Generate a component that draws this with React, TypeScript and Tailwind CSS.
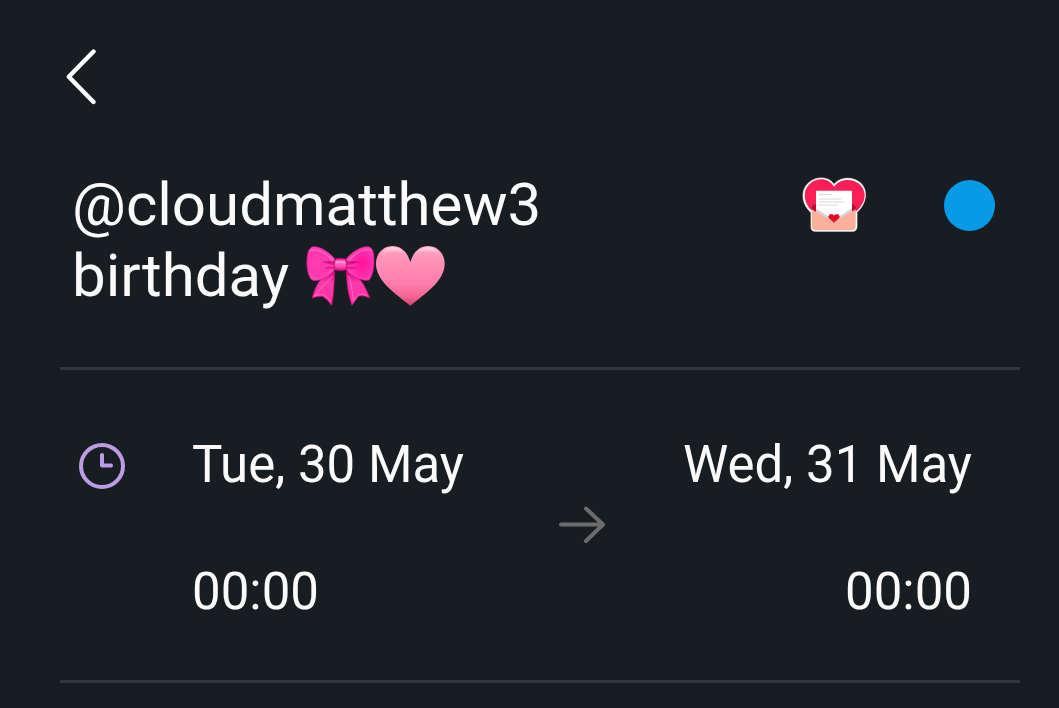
interface DateTimeProps {
  date: string;
  time: string;
  label: string;
  align: "left" | "right";
}

function BackIcon() {
  return (
    <svg width="32" height="58" viewBox="0 0 32 58" fill="none" aria-hidden="true">
      <path
        d="M29.5 3.5 4.8 28.8 29.5 54"
        stroke="#fff"
        strokeWidth="4.4"
        strokeLinecap="round"
        strokeLinejoin="round"
      />
    </svg>
  );
}

function BowIcon() {
  return (
    <svg
      className="inline-block h-[62px] w-[70px] align-[-11px]"
      viewBox="48 31 210 186"
      role="img"
      aria-label="ribbon"
    >
      <defs>
        <radialGradient id="bowLeft" cx="0.4" cy="0.48" r="0.62">
          <stop offset="0" stopColor="#ff3fae" />
          <stop offset="0.6" stopColor="#fd36ad" />
          <stop offset="0.85" stopColor="#ff4db9" />
          <stop offset="1" stopColor="#f0149a" />
        </radialGradient>
        <radialGradient id="bowRight" cx="0.6" cy="0.5" r="0.62">
          <stop offset="0" stopColor="#ff0f98" />
          <stop offset="0.6" stopColor="#fb2fab" />
          <stop offset="0.85" stopColor="#ff45b7" />
          <stop offset="1" stopColor="#ec1098" />
        </radialGradient>
        <linearGradient id="bowTail" x1="0" y1="0" x2="0" y2="1">
          <stop offset="0" stopColor="#c9006f" />
          <stop offset="0.35" stopColor="#fb3bab" />
          <stop offset="1" stopColor="#ff2ba3" />
        </linearGradient>
        <linearGradient id="bowKnot" x1="0" y1="0" x2="0" y2="1">
          <stop offset="0" stopColor="#f0108f" />
          <stop offset="0.3" stopColor="#ff7ccb" />
          <stop offset="0.65" stopColor="#ff4fb4" />
          <stop offset="1" stopColor="#e00a80" />
        </linearGradient>
      </defs>
      <path
        d="M98 128C84 142 73 165 67 190Q83 184 98 185Q112 194 125 212C131 182 132 148 134 112L124 107Z"
        fill="url(#bowTail)"
        stroke="#e5098a"
        strokeWidth="2"
      />
      <path
        d="M204 128C218 142 230 165 239 190Q222 181 206 184Q197 195 186 212C175 182 170 148 169 112L178 107Z"
        fill="url(#bowTail)"
        stroke="#e5098a"
        strokeWidth="2"
      />
      <path d="M127 124C108 145 93 160 73 184Q88 178 99 180Q112 185 122 202" fill="none" stroke="#ff75c7" strokeWidth="2.5" />
      <path d="M176 124C183 145 187 162 190 201Q198 184 207 179Q220 176 232 184" fill="none" stroke="#ff75c7" strokeWidth="2.5" />
      <path
        d="M134 72C118 53 93 35 70 36C58 37 52 54 51 76C49 101 56 128 66 136C84 143 115 126 136 105Z"
        fill="url(#bowLeft)"
        stroke="#ea1292"
        strokeWidth="2"
      />
      <path
        d="M169 72C185 53 211 35 234 36C247 37 252 53 252 76C253 101 246 128 237 136C219 141 187 126 167 105Z"
        fill="url(#bowRight)"
        stroke="#ea1292"
        strokeWidth="2"
      />
      <path d="M60 48Q76 42 98 53Q114 62 127 76" fill="none" stroke="#ff78cb" strokeWidth="4" strokeLinecap="round" opacity="0.7" />
      <path d="M244 48Q228 41 207 52Q190 62 177 77" fill="none" stroke="#ff78cb" strokeWidth="4" strokeLinecap="round" opacity="0.7" />
      <path d="M134 80Q112 78 94 81Q108 86 134 92Z" fill="#b90068" opacity="0.6" />
      <path d="M134 94Q115 94 100 101Q117 106 135 104Z" fill="#c9006f" opacity="0.45" />
      <path d="M169 80Q191 78 210 81Q195 86 169 92Z" fill="#b90068" opacity="0.6" />
      <path d="M169 94Q188 94 203 101Q187 106 168 104Z" fill="#c9006f" opacity="0.45" />
      <path
        d="M136 73Q151 69 167 73Q172 89 168 105Q151 112 135 105Q130 89 136 73Z"
        fill="url(#bowKnot)"
        stroke="#c80074"
        strokeWidth="2"
      />
      <path d="M137 83Q151 79 166 83" fill="none" stroke="#ff9ddb" strokeWidth="3" />
    </svg>
  );
}

function HeartIcon() {
  return (
    <svg
      className="inline-block h-[62px] w-[70px] align-[-11px]"
      viewBox="258 31 210 186"
      role="img"
      aria-label="pink heart"
    >
      <defs>
        <linearGradient id="heartFill" x1="0" y1="0" x2="0" y2="1">
          <stop offset="0" stopColor="#ffa3c1" />
          <stop offset="0.3" stopColor="#ff8fb6" />
          <stop offset="0.65" stopColor="#ff7baa" />
          <stop offset="0.85" stopColor="#f16594" />
          <stop offset="1" stopColor="#d93e70" />
        </linearGradient>
        <linearGradient id="heartShine" x1="0" y1="0" x2="0" y2="1">
          <stop offset="0" stopColor="#ffe0ea" />
          <stop offset="1" stopColor="#ffa3c1" stopOpacity="0" />
        </linearGradient>
      </defs>
      <path
        d="M361 83C353 54 335 34 308 34C279 34 258 57 258 87C258 139 317 177 361 213C405 177 464 139 464 87C464 57 443 34 414 34C387 34 369 54 361 83Z"
        fill="url(#heartFill)"
      />
      <path d="M271 66C276 46 290 37 308 37C328 37 343 48 351 65Q310 36 271 66Z" fill="url(#heartShine)" />
      <path d="M371 65C379 48 394 37 414 37C432 37 446 46 451 66Q412 36 371 65Z" fill="url(#heartShine)" />
    </svg>
  );
}

function LoveLetterIcon() {
  return (
    <svg width="68" height="58" viewBox="33 35 204 174" aria-hidden="true">
      <path
        d="M132 60C118 38 86 35 63 50C33 69 32 109 55 136L63 145V187Q63 201 77 201H187Q200 201 201 187V144C229 118 236 80 212 56C189 36 151 37 132 60Z"
        fill="#fff"
        stroke="#fff"
        strokeWidth="2"
        strokeLinejoin="round"
      />
      <path
        d="M132 68C119 43 89 39 66 53C39 71 38 105 58 132L132 190L203 137C229 111 231 82 209 60C187 40 147 43 132 68Z"
        fill="#fb1f55"
      />
      <path d="M65 136Q64 124 77 119H187Q200 124 197 136L132 170Z" fill="#b90d30" />
      <path d="M78 82Q78 79 81 79H183Q186 79 186 82V142L132 172L78 142Z" fill="#fff" />
      <g stroke="#d9d9dc" strokeWidth="3">
        <path d="M86 91H126" />
        <path d="M86 104H155" />
        <path d="M86 113H163" />
        <path d="M86 122H142" />
      </g>
      <path d="M78 132L122 160H142L186 132V142L132 176L78 142Z" fill="#d7d5d9" />
      <path d="M65 135L132 174L197 135V186Q197 198 185 198H78Q65 198 65 186Z" fill="#ffb09d" />
      <path
        d="M132 174L118 162C112 154 122 145 132 154C142 145 152 154 146 162Z"
        fill="#e60924"
        stroke="#e60924"
        strokeWidth="2"
      />
    </svg>
  );
}

function ClockIcon() {
  return (
    <svg width="48" height="48" viewBox="0 0 48 48" fill="none" stroke="#bd9ce6" strokeWidth="4" aria-hidden="true">
      <circle cx="24" cy="24" r="21" />
      <path d="M24 13V23.5H33" strokeLinecap="round" strokeLinejoin="round" />
    </svg>
  );
}

function ArrowIcon() {
  return (
    <svg
      width="48"
      height="40"
      viewBox="0 0 48 40"
      fill="none"
      stroke="#6c6c6d"
      strokeWidth="4"
      strokeLinecap="round"
      strokeLinejoin="round"
      aria-hidden="true"
    >
      <path d="M3 20.5H45M28 4.5L45 20.5L28 37" />
    </svg>
  );
}

function DateTime({ date, time, label, align }: DateTimeProps) {
  return (
    <div
      aria-label={label}
      role="group"
      className={
        align === "left"
          ? "flex flex-col items-start gap-[67px]"
          : "flex flex-col items-end gap-[67px]"
      }
    >
      <button type="button" className="whitespace-nowrap">
        {date}
      </button>
      <button type="button">{time}</button>
    </div>
  );
}

export default function App() {
  return (
    <main className="min-h-screen bg-[#181d21] pr-[39px] pl-[60px] font-['Roboto',sans-serif] text-[#fafafa]">
      <header className="pt-12 pl-1">
        <button type="button" aria-label="Back" className="block">
          <BackIcon />
        </button>
      </header>

      {/* Event title, sticker and colour */}
      <section className="flex items-start justify-between border-b-3 border-[#33373a] pt-[63px] pr-[25px] pb-14 pl-3">
        <h1 className="text-[60px] leading-[71px]">
          @cloudmatthew3
          <br />
          birthday{" "}
          <span className="pl-0.5 whitespace-nowrap">
            <BowIcon />
            <HeartIcon />
          </span>
        </h1>
        <div className="flex items-center gap-[75px] pt-[7px]">
          <button type="button" aria-label="Sticker">
            <LoveLetterIcon />
          </button>
          <button
            type="button"
            aria-label="Event colour"
            className="size-[51px] rounded-full bg-[#069be7]"
          />
        </div>
      </section>

      {/* Start and end */}
      <section className="flex items-start border-b-3 border-[#33373a] pt-[65px] pr-12 pb-[58px] pl-[18px] text-[51px] leading-[60px]">
        <div className="mr-[66px] pt-[7px]">
          <ClockIcon />
        </div>
        <div className="grid flex-1 grid-cols-[1fr_auto_1fr] items-start">
          <DateTime date="Tue, 30 May" time="00:00" label="Start" align="left" />
          <div className="pt-[69px]">
            <ArrowIcon />
          </div>
          <DateTime date="Wed, 31 May" time="00:00" label="End" align="right" />
        </div>
      </section>
    </main>
  );
}
